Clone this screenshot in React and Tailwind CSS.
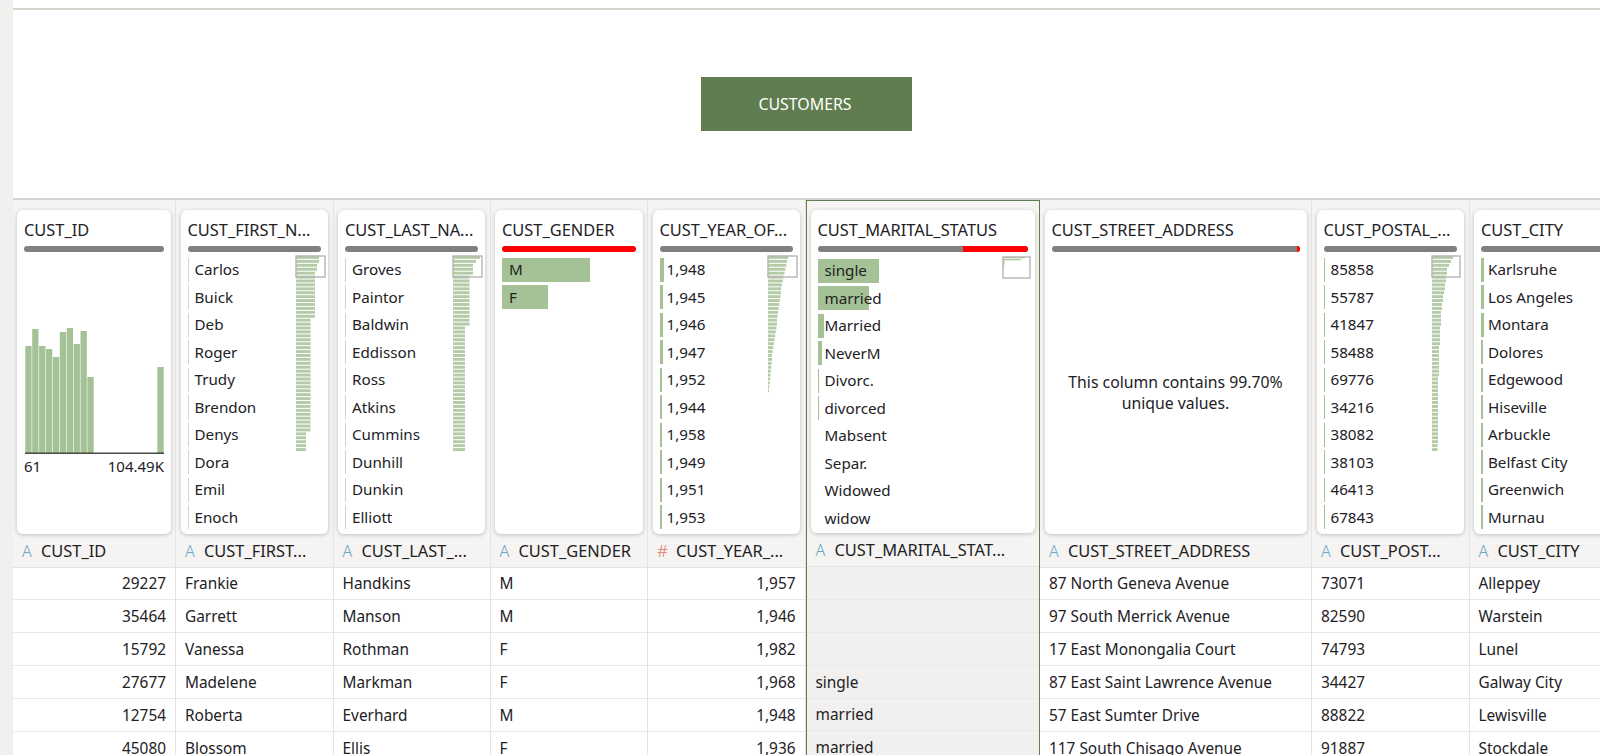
const FONT = "font-['Noto_Sans',sans-serif]"

// widths of the little overview charts, top bar first
function steps(list) {
  const out = []
  list.forEach(([w, n]) => {
    for (let i = 0; i < n; i++) out.push(w)
  })
  return out
}

function taper(from, to, n) {
  return Array.from({ length: n }, (_, i) => from + ((to - from) * i) / (n - 1))
}

const firstSpark = steps([[23, 2], [21, 2], [19, 12], [14.5, 29], [10, 5]])
const lastSpark = steps([[27, 1], [23, 1], [20, 3], [16.5, 13], [12, 32]])
const yearSpark = [...taper(20, 13, 9), ...taper(13, 9, 8), ...taper(9, 4, 9), ...taper(4, 1, 9)]
const postalSpark = [21, 19, 17, 15, 15, 14, 14, 13, 13, 12, 11, 11, 10, 10, 9, 9, 9, 9, 8, 8, 8, 8, 8, 7, 7, 7, 7, 7, 7, 7, 7, 6, 6, 6, 6, 6, 6, 6, 6, 6, 6, 6, 6, 6, 6, 6, 6, 6, 5.5, 5.5]
const maritalSpark = [22, 18, 2, 1.5, 1, 1]

const hist = [107, 124, 107, 104, 96, 121, 125, 109, 122, 76]

const columns = [
  {
    title: 'CUST_ID', head: 'CUST_ID', width: 'w-[163px]', align: 'right',
    kind: 'hist',
    cells: ['29227', '35464', '15792', '27677', '12754', '45080'],
  },
  {
    title: 'CUST_FIRST_N...', head: 'CUST_FIRST...', width: 'w-[157.5px]',
    values: ['Carlos', 'Buick', 'Deb', 'Roger', 'Trudy', 'Brendon', 'Denys', 'Dora', 'Emil', 'Enoch'],
    bars: [1.2, 1.2, 1.2, 1.2, 1.2, 1.2, 1.2, 1.2, 1.2, 1.2],
    faint: true, spark: firstSpark, sparkBox: 29,
    cells: ['Frankie', 'Garrett', 'Vanessa', 'Madelene', 'Roberta', 'Blossom'],
  },
  {
    title: 'CUST_LAST_NA...', head: 'CUST_LAST_...', width: 'w-[157px]',
    values: ['Groves', 'Paintor', 'Baldwin', 'Eddisson', 'Ross', 'Atkins', 'Cummins', 'Dunhill', 'Dunkin', 'Elliott'],
    bars: [1.2, 1.2, 1.2, 1.2, 1.2, 1.2, 1.2, 1.2, 1.2, 1.2],
    faint: true, spark: lastSpark, sparkBox: 29,
    cells: ['Handkins', 'Manson', 'Rothman', 'Markman', 'Everhard', 'Ellis'],
  },
  {
    title: 'CUST_GENDER', head: 'CUST_GENDER', width: 'w-[157.5px]', red: 100,
    values: ['M', 'F'], bars: [88, 46],
    cells: ['M', 'M', 'F', 'F', 'M', 'F'],
  },
  {
    title: 'CUST_YEAR_OF...', head: 'CUST_YEAR_...', hash: true, width: 'w-[157.5px]', align: 'right',
    values: ['1,948', '1,945', '1,946', '1,947', '1,952', '1,944', '1,958', '1,949', '1,951', '1,953'],
    bars: [4.5, 3, 3, 3, 2.5, 2.5, 2.5, 2, 2, 2],
    spark: yearSpark, sparkBox: 29,
    cells: ['1,957', '1,946', '1,982', '1,968', '1,948', '1,936'],
  },
  {
    title: 'CUST_MARITAL_STATUS', head: 'CUST_MARITAL_STAT...', width: 'w-[234.5px]', selected: true, red: 31,
    values: ['single', 'married', 'Married', 'NeverM', 'Divorc.', 'divorced', 'Mabsent', 'Separ.', 'Widowed', 'widow'],
    bars: [61, 51, 6, 4, 1.5, 0.7, 0, 0, 0, 0],
    spark: maritalSpark, sparkBox: 27,
    cells: ['', '', '', 'single', 'married', 'married'],
  },
  {
    title: 'CUST_STREET_ADDRESS', head: 'CUST_STREET_ADDRESS', width: 'w-[272px]', red: 1.2,
    kind: 'unique',
    cells: ['87 North Geneva Avenue', '97 South Merrick Avenue', '17 East Monongalia Court', '87 East Saint Lawrence Avenue', '57 East Sumter Drive', '117 South Chisago Avenue'],
  },
  {
    title: 'CUST_POSTAL_...', head: 'CUST_POST...', width: 'w-[157.5px]',
    values: ['85858', '55787', '41847', '58488', '69776', '34216', '38082', '38103', '46413', '67843'],
    bars: [1.5, 1.5, 1.5, 1.5, 1.5, 1.5, 1.5, 1.5, 1.5, 1.5],
    spark: postalSpark, sparkBox: 28,
    cells: ['73071', '82590', '74793', '34427', '88822', '91887'],
  },
  {
    title: 'CUST_CITY', head: 'CUST_CITY', width: 'w-[157.5px]',
    values: ['Karlsruhe', 'Los Angeles', 'Montara', 'Dolores', 'Edgewood', 'Hiseville', 'Arbuckle', 'Belfast City', 'Greenwich', 'Murnau'],
    bars: [3, 2.5, 2.5, 2, 2, 2, 2, 1.5, 1.5, 1.5],
    cells: ['Alleppey', 'Warstein', 'Lunel', 'Galway City', 'Lewisville', 'Stockdale'],
  },
]

/** Overview chart in the corner of a card, the box marks the visible part */
function Spark({ widths, box, tiny }) {
  const pitch = tiny ? 2 : 3.92
  return (
    <svg width="32" height="200" className="absolute right-[-6px] top-[-3px]">
      {widths.map((w, i) => (
        <rect key={i} x="1" y={1 + i * pitch} width={w} height={tiny ? 1.4 : 2.9} fill="#b3cba7" />
      ))}
      <rect x="1" y="1" width={box} height="21" fill="none" stroke="#b5b5b3" strokeWidth="1.4" />
    </svg>
  )
}

function Histogram() {
  return (
    <div>
      <svg width="141" height="202" className="block">
        {hist.map((h, i) => (
          <rect key={i} x={1.3 + i * 6.9} y={201 - h} width="6.3" height={h} fill="#a5c196" />
        ))}
        <rect x="133.3" y="115" width="6.4" height="86" fill="#a5c196" />
        <rect x="1" y="200.6" width="139" height="1.2" fill="#1f1e1c" />
      </svg>
      <div className="flex justify-between text-[15px] leading-[20px] mt-[2px]">
        <span>61</span>
        <span>104.49K</span>
      </div>
    </div>
  )
}

function ValueRows({ col }) {
  return (
    <div className={`relative flex flex-col gap-[3.5px] ${col.selected ? 'mt-[6.5px]' : 'mt-[6px]'}`}>
      {col.values.map((v, i) => (
        <div key={v} className="relative h-[24px] flex items-center pl-[7px] text-[15.2px]">
          {col.bars[i] > 0 && (
            <div
              className={`absolute left-0 top-0 bottom-0 ${col.faint ? 'bg-[#c9dac0]' : 'bg-[#a5c196]'}`}
              style={{ width: col.bars[i] }}
            />
          )}
          <span className="relative whitespace-nowrap">{v}</span>
        </div>
      ))}
      {col.spark && <Spark widths={col.spark} box={col.sparkBox} tiny={col.selected} />}
    </div>
  )
}

function ProfileCard({ col }) {
  const qualityRed = col.red || 0
  const box = col.selected
    ? 'mt-[9.2px] h-[322.8px] mx-[4px]'
    : col.kind === 'hist'
      ? 'mt-[9.5px] h-[324px] mx-[4px]'
      : 'mt-[9.5px] h-[324px] mx-[4.5px]'
  return (
    <div className={`${box} shrink-0 rounded-[6px] bg-white px-[7px] shadow-[0_1px_4px_rgba(0,0,0,0.22)] overflow-hidden`}>
      <div className="h-[36px] pt-[10px] text-[16.4px] leading-[20px] whitespace-nowrap">{col.title}</div>
      <div className="flex h-[6px] rounded-full overflow-hidden bg-[#808080]">
        <div className="ml-auto bg-[#ff0000]" style={{ width: `${qualityRed}%` }} />
      </div>
      {col.kind === 'hist' && <Histogram />}
      {col.kind === 'unique' && (
        <div className="h-[282px] flex items-center justify-center text-center text-[15.8px] leading-[21px]">
          <p>
            This column contains 99.70%
            <br />
            unique values.
          </p>
        </div>
      )}
      {col.values && <ValueRows col={col} />}
    </div>
  )
}

function Column({ col }) {
  return (
    <div
      className={`${col.width} shrink-0 flex flex-col ${
        col.selected
          ? 'border-x-[1.5px] border-t-[1.5px] border-[#5f7d4f]'
          : 'border-r border-[#e4e3e1]'
      }`}
    >
      <ProfileCard col={col} />
      <div className="h-[34px] shrink-0 flex items-center gap-[9px] pl-[9px] pt-[2px] whitespace-nowrap border-b-[1.5px] border-[#e4e3e1] text-[16.4px]">
        <span className={`w-[10px] font-light ${col.hash ? 'text-[17px] text-[#e0796b]' : 'text-[16px] text-[#6ba8c6]'}`}>
          {col.hash ? '#' : 'A'}
        </span>
        <span>{col.head}</span>
      </div>
      {col.cells.map((c, i) => (
        <div
          key={i}
          className={`h-[32.9px] shrink-0 flex items-center px-[9px] pt-px border-b-[1.5px] border-[#e9e8e6] text-[15.4px] whitespace-nowrap ${
            col.align === 'right' ? 'justify-end' : ''
          } ${col.selected ? 'bg-[#f1f0ee]' : 'bg-white'}`}
        >
          {c}
        </div>
      ))}
    </div>
  )
}

export default function App() {
  return (
    <div className={`${FONT} w-[1600px] h-[755px] overflow-hidden flex bg-white text-[#22211f]`}>
      <div className="w-[13px] shrink-0 bg-[#f1f0ee]" />
      <div className="flex-1 min-w-0 flex flex-col">
        <div className="h-[10px] shrink-0 border-b-2 border-[#d6d6cf]" />
        <div className="h-[188px] shrink-0 flex items-center justify-center">
          <div className="w-[211px] h-[54px] flex items-center justify-center pr-[3px] pt-px bg-[#5f7d4f] text-white text-[15.9px]">
            CUSTOMERS
          </div>
        </div>
        <div className="relative flex-1 flex border-t-2 border-[#d4d4d0]">
          <div className="absolute left-0 right-0 top-0 h-[367px] bg-[#f5f4f2]" />
          <div className="relative flex">
            {columns.map((col) => (
              <Column key={col.title} col={col} />
            ))}
          </div>
        </div>
      </div>
    </div>
  )
}
